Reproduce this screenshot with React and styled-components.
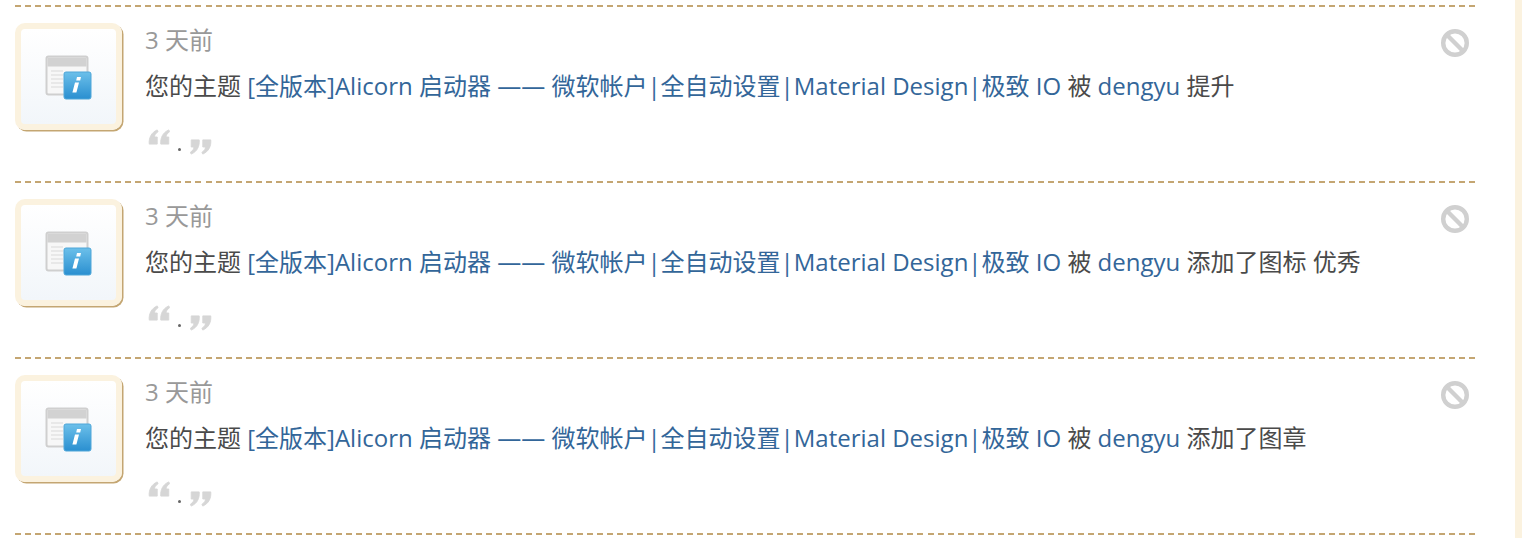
import styled, { createGlobalStyle } from "styled-components";

const notices = [
  { id: 1, action: "提升" },
  { id: 2, action: "添加了图标 优秀" },
  { id: 3, action: "添加了图章" },
];

const GlobalStyle = createGlobalStyle`
  html, body {
    margin: 0;
    height: 100%;
    overflow: hidden;
    background: #fff;
  }
  body {
    font-family: "Open Sans", "Noto Sans CJK SC", sans-serif;
    color: #444;
  }
`;

const Page = styled.div`
  display: flex;
  justify-content: space-between;
  height: 538px;
  padding-left: 15px;
`;

const List = styled.div`
  width: 1460px;
  padding-top: 5px;
`;

const Dash = styled.div`
  height: 2px;
  background: repeating-linear-gradient(90deg, #c4a672 0 6px, transparent 6px 10.0276px);
`;

const Row = styled.div`
  display: flex;
  height: 174px;
  box-sizing: border-box;
  padding-top: 16px;
`;

const Avatar = styled.div`
  width: 107px;
  height: 107px;
  box-sizing: border-box;
  flex-shrink: 0;
  display: flex;
  align-items: center;
  justify-content: center;
  border: 6px solid #fbf2df;
  border-radius: 10px;
  background: linear-gradient(#fff, #f2f6fa);
  box-shadow: 1.5px 1.5px 0 #c4a672;
`;

const Body = styled.div`
  flex: 1;
  margin-left: 23px;
  position: relative;
`;

const Time = styled.div`
  font-size: 24px;
  line-height: 34px;
  height: 32px;
  color: #999;
`;

const Text = styled.div`
  margin-top: 15px;
  font-size: 24px;
  line-height: 32px;
  color: #4a4a4a;
  white-space: nowrap;
`;

const Link = styled.a`
  color: #369;
  text-decoration: none;
`;

const Quote = styled.div`
  display: flex;
  align-items: flex-start;
  margin-top: 27px;
  margin-left: 3px;
  height: 26px;
`;

const Dot = styled.span`
  width: 3px;
  height: 3px;
  margin: 19px 9px 0 8px;
  border-radius: 50%;
  background: #666;
`;

const QuoteMark = styled.svg`
  width: 22px;
  height: 16px;
  margin-top: ${(p) => p.$top}px;
  fill: #d6d6d6;
  stroke: #d6d6d6;
  stroke-width: 1;
  filter: blur(0.6px);
`;

const Delete = styled.svg`
  position: absolute;
  top: 5px;
  right: 5px;
  width: 30px;
  height: 30px;
  fill: none;
  stroke: #d0d0d0;
  stroke-width: 4.4;
  filter: blur(0.7px);
`;

const Strip = styled.div`
  width: 7px;
  background: #fbf2df;
`;

const InfoIcon = styled.svg`
  filter: blur(0.5px);
`;

const NoticeIcon = () => (
  <InfoIcon width="48" height="48" viewBox="0 0 48 48">
    <defs>
      <linearGradient id="info" x1="0" y1="0" x2="0" y2="1">
        <stop offset="0" stopColor="#6cc0ea" />
        <stop offset="1" stopColor="#2a8fd0" />
      </linearGradient>
    </defs>
    <rect x="1.5" y="3.5" width="41" height="38" rx="2" fill="#f7f7f7" stroke="#cfcfcf" strokeWidth="2" />
    <rect x="2.5" y="4.5" width="39" height="9" fill="#d2d2d2" />
    <path d="M6 18h12M6 22h12M6 26h12M6 30h12M6 34h12" stroke="#e4e4e4" strokeWidth="1.5" />
    <rect x="19" y="19" width="27" height="27" rx="2" fill="url(#info)" stroke="#4ea6d8" />
    <path d="M32 24h4l-.8 3.5h-4zM30 29.5h4l-2.6 10h-4z" fill="#fff" />
  </InfoIcon>
);

const OpenQuote = () => (
  <QuoteMark $top={0} viewBox="0 0 24 18">
    <path d="M1 17c-.6-7 2.2-13 9-16l1 2c-3 2-4 4-4 6h3v8zM14 17c-.6-7 2.2-13 9-16l1 2c-3 2-4 4-4 6h3v8z" />
  </QuoteMark>
);

const CloseQuote = () => (
  <QuoteMark $top={10} viewBox="0 0 24 18">
    <path d="M23 1c.6 7-2.2 13-9 16l-1-2c3-2 4-4 4-6h-3V1zM10 1c.6 7-2.2 13-9 16l-1-2c3-2 4-4 4-6H1V1z" />
  </QuoteMark>
);

const Notice = ({ action }) => (
  <>
    <Row>
      <Avatar>
        <NoticeIcon />
      </Avatar>
      <Body>
        <Time>3 天前</Time>
        <Text>
          您的主题 <Link href="#">[全版本]Alicorn 启动器 —— 微软帐户|全自动设置|Material Design|极致 IO</Link> 被{" "}
          <Link href="#">dengyu</Link> {action}
        </Text>
        <Quote>
          <OpenQuote />
          <Dot />
          <CloseQuote />
        </Quote>
        <Delete viewBox="0 0 30 30">
          <circle cx="15" cy="15" r="11.8" />
          <path d="M6.8 6.8l16.4 16.4" />
        </Delete>
      </Body>
    </Row>
    <Dash />
  </>
);

export default function App() {
  return (
    <Page>
      <GlobalStyle />
      <List>
        <Dash />
        {notices.map((n) => (
          <Notice key={n.id} action={n.action} />
        ))}
      </List>
      <Strip />
    </Page>
  );
}
